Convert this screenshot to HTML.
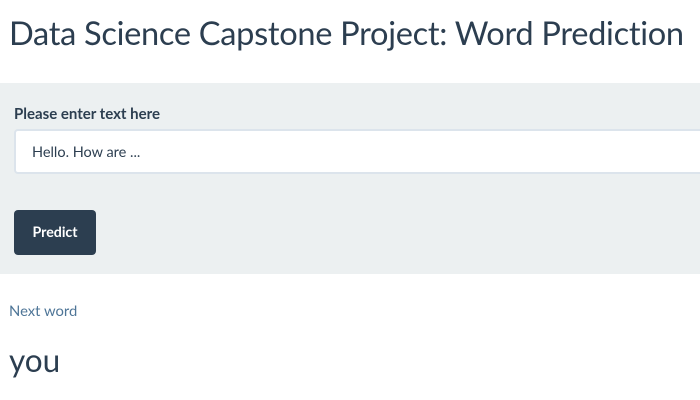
<!DOCTYPE html>
<html><head><style>
body{margin:0;width:700px;height:400px;overflow:hidden;background:#fff;font-family:"Lato","Liberation Sans",sans-serif;color:#2c3e50;position:relative}
.t{position:absolute;left:9px;top:13px;font-size:32.6px;white-space:nowrap;letter-spacing:-0.3px}
.panel{position:absolute;left:0;top:83px;width:700px;height:191px;background:#ecf0f1}
.lbl{position:absolute;left:14px;top:105px;font-size:15px;font-weight:bold}
.inp{position:absolute;left:14px;top:129px;background:#fff;border:2px solid #dce4ec;border-radius:4px;box-sizing:border-box;width:710px;height:45px}
.inp span{position:absolute;left:16px;top:13px;font-size:14.5px}
.btn{position:absolute;left:14px;top:210px;width:82px;height:45px;background:#2c3e50;border-radius:4px;color:#fff;font-size:14.2px;font-weight:bold;text-align:center;line-height:46px}
.nw{position:absolute;left:9px;top:302px;font-size:14.8px;color:#4e7597}
.you{position:absolute;left:9px;top:341px;font-size:31.5px}
</style></head><body>
<div class="t">Data Science Capstone Project: Word Prediction</div>
<div class="panel"></div>
<div class="lbl">Please enter text here</div>
<div class="inp"><span>Hello. How are ...</span></div>
<div class="btn">Predict</div>
<div class="nw">Next word</div>
<div class="you">you</div>
</body></html>
